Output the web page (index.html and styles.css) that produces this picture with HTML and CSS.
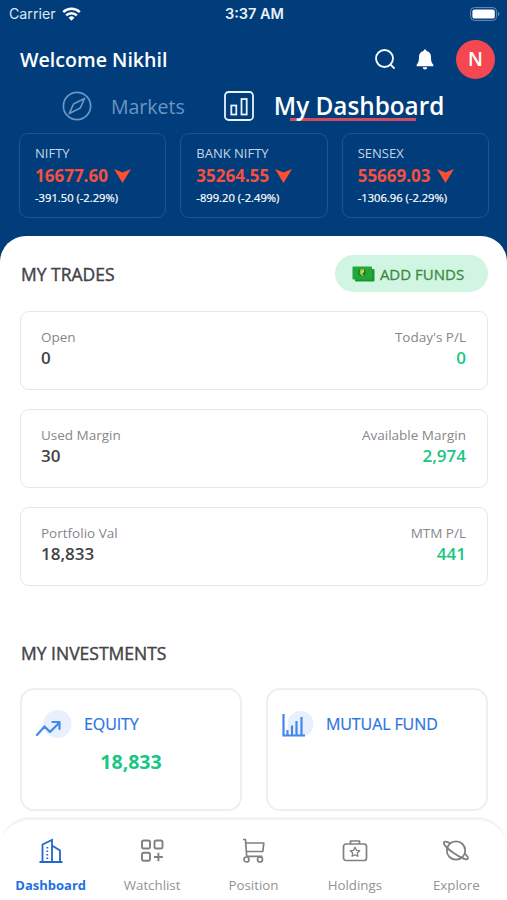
FILE: index.html
```html
<!DOCTYPE html>
<html lang="en">
<head>
    <meta charset="UTF-8">
    <meta name="viewport" content="width=device-width, initial-scale=1.0">
    <title>My Dashboard</title>
    <link rel="stylesheet" href="styles.css">
</head>
<body>
    <div class="app">
        <header class="header">
            <div class="status-bar">
                <div class="carrier">
                    <span>Carrier</span>
                    <svg width="19" height="14" viewBox="0 0 19 14" fill="none" stroke="#fff" stroke-width="2.5">
                        <path d="M1.2 5.2a11.8 11.8 0 0 1 16.6 0"/>
                        <path d="M4.2 8.4a7.5 7.5 0 0 1 10.6 0"/>
                        <path d="M6.6 10.8a4.1 4.1 0 0 1 5.8 0L9.5 13.8z" fill="#fff" stroke="none"/>
                    </svg>
                </div>
                <span class="time">3:37 AM</span>
                <svg class="battery" width="30" height="14" viewBox="0 0 30 14">
                    <rect x=".6" y=".6" width="26" height="12.8" rx="3.8" fill="none" stroke="#6c8fb5"/>
                    <rect x="2.4" y="2.4" width="22.4" height="9.2" rx="2.2" fill="#fff"/>
                    <path d="M28 4.8c1.8.6 1.8 3.8 0 4.4z" fill="#6c8fb5"/>
                </svg>
            </div>

            <div class="welcome">
                <h1>Welcome Nikhil</h1>
                <svg class="search" width="22" height="22" viewBox="0 0 22 22" fill="none" stroke="#fff" stroke-width="1.8" stroke-linecap="round">
                    <circle cx="10.5" cy="10.5" r="8.5"/>
                    <path d="M16.6 16.6l3.4 3.4"/>
                </svg>
                <svg class="bell" width="18" height="21" viewBox="0 0 18 21" fill="#fff">
                    <path d="M9 .5c1 0 1.5.7 1.5 1.6 2.9.7 4.5 3 4.5 5.6 0 4.5.7 6.2 2.3 7.8v1.8H.7v-1.8C2.3 13.9 3 12.2 3 7.700c0-2.600 1.600-4.900 4.500-5.600C7.500 1.200 8 .5 9 .5z"/>
                    <path d="M6.800 18.200h4.400a2.200 2.200 0 0 1-4.400 0z"/>
                </svg>
                <div class="avatar">N</div>
            </div>

            <nav class="tabs">
                <svg class="compass" width="30" height="30" viewBox="0 0 30 30" fill="none" stroke="#6e96c2" stroke-width="1.7" stroke-linejoin="round">
                    <circle cx="15" cy="15" r="13.6"/>
                    <path d="M22.5 7.5l-4.200 9.500-11 5.500 4.200-9.500z"/>
                </svg>
                <a class="tab">Markets</a>
                <svg class="chart" width="30" height="30" viewBox="0 0 30 30" fill="none" stroke="#e9f1fa" stroke-width="1.8">
                    <rect x="1" y="1" width="28" height="28" rx="3.5"/>
                    <rect x="7.3" y="14.5" width="5" height="9"/>
                    <rect x="17.5" y="8" width="5.2" height="15.5"/>
                </svg>
                <a class="tab active">My Dashboard</a>
            </nav>

            <div class="indices">
                <div class="index-card">
                    <h2>NIFTY</h2>
                    <div class="price">16677.60 <svg width="17" height="14" viewBox="0 0 17 14"><path d="M0 0l8.5 3.5L17 0 8.5 14z"/></svg></div>
                    <p>-391.50 (-2.29%)</p>
                </div>
                <div class="index-card">
                    <h2>BANK NIFTY</h2>
                    <div class="price">35264.55 <svg width="17" height="14" viewBox="0 0 17 14"><path d="M0 0l8.5 3.5L17 0 8.5 14z"/></svg></div>
                    <p>-899.20 (-2.49%)</p>
                </div>
                <div class="index-card">
                    <h2>SENSEX</h2>
                    <div class="price">55669.03 <svg width="17" height="14" viewBox="0 0 17 14"><path d="M0 0l8.5 3.5L17 0 8.5 14z"/></svg></div>
                    <p>-1306.96 (-2.29%)</p>
                </div>
            </div>
        </header>

        <main class="content">
            <div class="section-header">
                <h2 class="section-title">MY TRADES</h2>
                <button class="add-funds">
                    <svg width="23" height="16" viewBox="0 0 23 16">
                        <rect x="3" y="3" width="19.500" height="12.500" rx="1" fill="#1b962f"/>
                        <rect x=".5" y=".5" width="19.500" height="13" rx="1" fill="#25a63a"/>
                        <circle cx="10" cy="6.500" r="3.800" fill="#148429"/>
                        <path d="M8 4h4M8 5.800h4M9 4c3.300 0 2.800 3.200-.4 3.200l2.400 2.400" fill="none" stroke="#f0e03c" stroke-width="1.100"/>
                    </svg>
                    ADD FUNDS
                </button>
            </div>

            <div class="trade-card">
                <div>
                    <span class="label">Open</span>
                    <span class="value">0</span>
                </div>
                <div class="right">
                    <span class="label">Today's P/L</span>
                    <span class="value green">0</span>
                </div>
            </div>
            <div class="trade-card">
                <div>
                    <span class="label">Used Margin</span>
                    <span class="value">30</span>
                </div>
                <div class="right">
                    <span class="label">Available Margin</span>
                    <span class="value green">2,974</span>
                </div>
            </div>
            <div class="trade-card">
                <div>
                    <span class="label">Portfolio Val</span>
                    <span class="value">18,833</span>
                </div>
                <div class="right">
                    <span class="label">MTM P/L</span>
                    <span class="value green">441</span>
                </div>
            </div>

            <h2 class="section-title investments-title">MY INVESTMENTS</h2>
            <div class="investments">
                <div class="investment-card">
                    <div class="investment-name">
                        <svg width="36" height="30" viewBox="0 0 36 30">
                            <circle cx="21.5" cy="15" r="14" fill="#e8effd"/>
                            <path d="M1 26l7.500-8.500 5.500 5.500 9.500-9.500M16.500 13H23.500v7" fill="none" stroke="#4287ea" stroke-width="2.200" stroke-linecap="round" stroke-linejoin="round"/>
                        </svg>
                        <h3>EQUITY</h3>
                    </div>
                    <p class="investment-value">18,833</p>
                </div>
                <div class="investment-card">
                    <div class="investment-name mutual">
                        <svg width="36" height="30" viewBox="0 0 36 30">
                            <circle cx="18.5" cy="15" r="13" fill="#e8effd"/>
                            <path d="M1.500 5v21.500h21.500M5.500 26v-5M10 26v-9.500M14.500 26V12M19.500 26V8" fill="none" stroke="#4287ea" stroke-width="2.200"/>
                        </svg>
                        <h3>MUTUAL FUND</h3>
                    </div>
                </div>
            </div>
        </main>

        <nav class="bottom-nav">
            <a class="nav-item active">
                <svg width="28" height="28" viewBox="0 0 28 28" fill="none" stroke="#2267c9" stroke-width="1.8">
                    <path d="M2.500 25h23M5.500 25V7.500L15 3v22M15 8.500l8 5V25"/>
                    <path d="M10.300 10v13" stroke-dasharray="1.500 2"/>
                </svg>
                Dashboard
            </a>
            <a class="nav-item">
                <svg width="28" height="28" viewBox="0 0 28 28" fill="none" stroke="#808080" stroke-width="1.9">
                    <rect x="4" y="3.500" width="8" height="8" rx="1.800"/>
                    <rect x="16.500" y="3.500" width="8" height="8" rx="1.800"/>
                    <rect x="4" y="15.700" width="8" height="8" rx="1.800"/>
                    <path d="M16 20h8.800M20.400 15.700v8.600"/>
                </svg>
                Watchlist
            </a>
            <a class="nav-item">
                <svg width="28" height="28" viewBox="0 0 28 28" fill="none" stroke="#808080" stroke-width="1.7" stroke-linejoin="round">
                    <path d="M4 2.500h2.500l1.200 17M7.500 6h17.300l-1 8.500H8M8 19.300H23.500"/>
                    <circle cx="7.500" cy="22.500" r="2.500"/>
                    <circle cx="21" cy="22.500" r="2.500"/>
                </svg>
                Position
            </a>
            <a class="nav-item">
                <svg width="28" height="28" viewBox="0 0 28 28" fill="none" stroke="#808080" stroke-width="1.7" stroke-linejoin="round">
                    <rect x="2.500" y="7" width="23" height="16.500" rx="2.500"/>
                    <path d="M9.500 7V4h9v3"/>
                    <path d="M14 10.300l1.400 3 3.300.4-2.400 2.300.6 3.300-2.900-1.600-2.900 1.600.6-3.300-2.400-2.300 3.300-.4z" stroke-width="1.300"/>
                </svg>
                Holdings
            </a>
            <a class="nav-item">
                <svg width="28" height="28" viewBox="0 0 28 28" fill="none" stroke="#808080" stroke-width="1.8" stroke-linejoin="round">
                    <circle cx="14" cy="13.500" r="9.200"/>
                    <path d="M8 6C4.500 4.300 2 4.100 1.800 5.500c-.3 2.500 4.700 7 10.200 10.800 6.500 4.500 12.800 7.200 13.800 5.400.7-1.200-.7-3-3.300-5.400"/>
                </svg>
                Explore
            </a>
        </nav>
    </div>
</body>
</html>
```
FILE: styles.css
```css
* {
    margin: 0;
    padding: 0;
    box-sizing: border-box;
}

body {
    font-family: 'Open Sans', 'Noto Sans', sans-serif;
    background: #fff;
    color: #434348;
}

svg {
    display: block;
    flex-shrink: 0;
}

.app {
    height: 900px;
    display: flex;
    flex-direction: column;
    overflow: hidden;
}

.header {
    height: 264px;
    margin-bottom: -28px;
    flex-shrink: 0;
    background: #003d7a;
    color: #fff;
}

.status-bar {
    height: 27px;
    padding: 0 7px 0 9px;
    display: grid;
    grid-template-columns: 1fr auto 1fr;
    align-items: center;
    font-family: Inter, sans-serif;
    font-size: 14.2px;
}

.carrier {
    display: flex;
    align-items: center;
    gap: 6px;
    color: #dce7f2;
}

.time {
    font-size: 14.5px;
    font-weight: 600;
    color: #e9f0f7;
}

.battery {
    justify-self: end;
}

.welcome {
    height: 65px;
    padding: 0 12px 1px 20px;
    display: flex;
    align-items: center;
}

.welcome h1 {
    flex: 1;
    font-size: 19.6px;
    font-weight: 600;
}

.search {
    margin-right: 20px;
}

.bell {
    margin-right: 22px;
}

.avatar {
    width: 39px;
    height: 39px;
    border-radius: 50%;
    background: #f5474f;
    display: flex;
    align-items: center;
    justify-content: center;
    font-size: 19px;
    font-weight: 600;
}

.tabs {
    height: 28px;
    padding-left: 62px;
    display: flex;
    align-items: center;
}

.tab {
    font-size: 19.5px;
    color: #6e96c2;
    white-space: nowrap;
}

.compass {
    margin-right: 19px;
}

.chart {
    margin: 0 20px 0 39px;
}

.tab.active {
    color: #fff;
    font-size: 24.3px;
    line-height: 34px;
    font-weight: 600;
    background: linear-gradient(#d64a5e, #d64a5e) 16px 29px / 126px 3px no-repeat;
}

.indices {
    display: grid;
    grid-template-columns: repeat(3, 1fr);
    gap: 14px;
    padding: 13px 18px 0 19px;
}

.index-card {
    height: 85px;
    padding: 11px 0 0 15px;
    border: 1px solid #1d5591;
    border-radius: 9px;
}

.index-card h2 {
    font-size: 13px;
    line-height: 17px;
    font-weight: 400;
    color: #c6d5e5;
}

.price {
    display: flex;
    align-items: center;
    gap: 6px;
    font-size: 17px;
    line-height: 28px;
    font-weight: 700;
    color: #f5503f;
}

.price svg {
    fill: #ff4f33;
}

.index-card p {
    font-size: 11.2px;
    line-height: 15px;
    -webkit-text-stroke: 0.2px;
}

.content {
    flex: 1;
    min-height: 0;
    padding: 19px 19px 0 20px;
    background: #fff;
    border-radius: 26px 26px 0 0;
}

.section-header {
    display: flex;
    align-items: center;
    justify-content: space-between;
    margin-bottom: 19px;
}

.section-title {
    padding-left: 1px;
    font-size: 17.5px;
    line-height: 24px;
    font-weight: 400;
    -webkit-text-stroke: 0.4px;
}

.add-funds {
    width: 153px;
    height: 37px;
    padding-right: 7px;
    border: none;
    border-radius: 19px;
    background: #d1f5e3;
    color: #3b8a3f;
    display: flex;
    align-items: center;
    justify-content: center;
    gap: 5px;
    font-family: inherit;
    font-size: 15px;
    -webkit-text-stroke: 0.3px;
}

.trade-card {
    height: 79px;
    margin-bottom: 19px;
    padding: 15px 20px;
    border: 1.5px solid #e7e7e7;
    border-radius: 9px;
    display: flex;
    justify-content: space-between;
}

.label,
.value {
    display: block;
}

.label {
    font-size: 13.5px;
    line-height: 20px;
    color: #86868b;
}

.value {
    font-size: 17px;
    line-height: 21px;
    font-weight: 600;
}

.right {
    margin-right: 1px;
    text-align: right;
}

.green,
.investment-value {
    color: #16c784;
}

.investments-title {
    margin-top: 55px;
}

.investments {
    display: grid;
    grid-template-columns: 1fr 1fr;
    gap: 24px;
    margin-top: 23px;
}

.investment-card {
    height: 123px;
    padding: 19px 14px;
    border: 2px solid #efefef;
    border-radius: 14px;
}

.investment-name {
    display: flex;
    align-items: center;
    gap: 12px;
    color: #2b74e2;
}

.investment-name.mutual {
    gap: 8px;
}

.investment-name h3 {
    font-size: 16px;
    font-weight: 400;
    letter-spacing: -0.1px;
    -webkit-text-stroke: 0.2px;
}

.investment-value {
    margin-top: 9px;
    font-size: 19.5px;
    line-height: 28px;
    font-weight: 700;
    text-align: center;
}

.bottom-nav {
    height: 83px;
    flex-shrink: 0;
    padding-top: 17px;
    display: grid;
    grid-template-columns: repeat(5, 1fr);
    background: #fff;
    border-top: 3px solid #f3f3f3;
    border-radius: 30px 30px 0 0;
}

.nav-item {
    display: flex;
    flex-direction: column;
    align-items: center;
    gap: 11px;
    font-size: 13.3px;
    line-height: 18px;
    color: #939393;
}

.nav-item.active {
    color: #2470e0;
    font-size: 13px;
    font-weight: 700;
}
```
